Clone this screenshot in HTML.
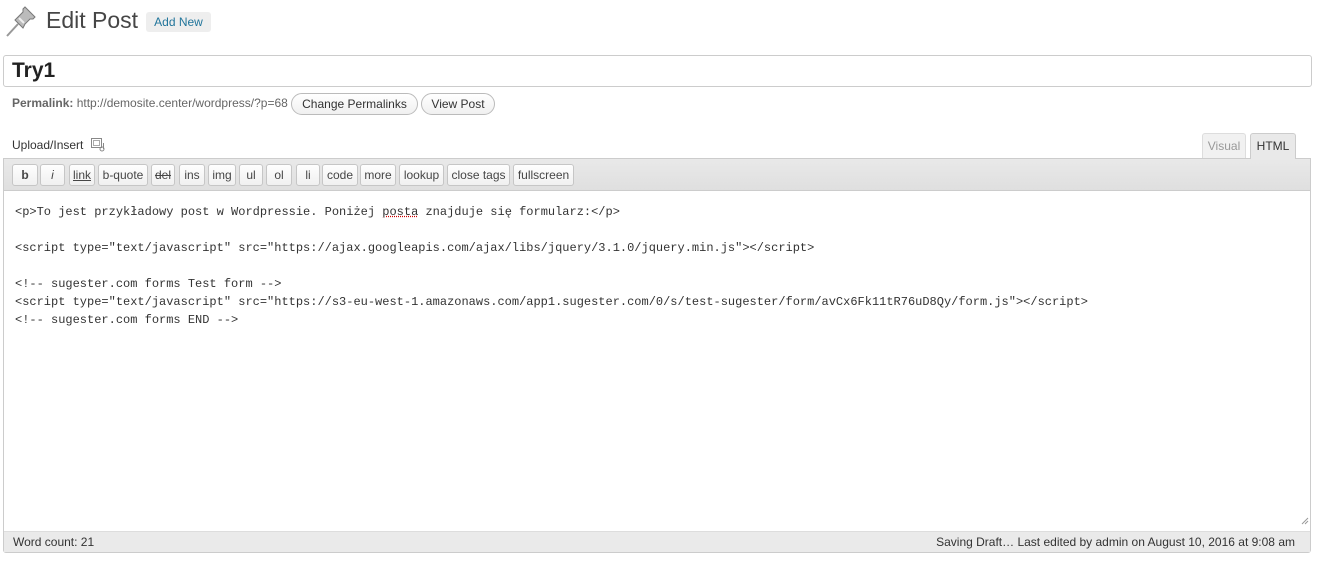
<!DOCTYPE html>
<html><head><meta charset="utf-8"><style>
*{box-sizing:border-box;margin:0;padding:0}
body{width:1317px;height:561px;background:#fff;font-family:"Liberation Sans",Arial,sans-serif;color:#333;position:relative;overflow:hidden}
.a{position:absolute}
.tb{position:absolute;top:164px;height:22px;border:1px solid #c6c6c6;border-radius:3px;background:linear-gradient(#fefefe,#f0f0f0);font-size:12px;color:#464646;text-align:center;line-height:20px}
.pb{position:absolute;top:93px;height:22px;border:1px solid #bbb;border-radius:11px;background:linear-gradient(#fff,#f0f0f0);font-size:12px;color:#333;text-align:center;line-height:20px}
pre{font-family:"Liberation Mono",monospace;font-size:12px;line-height:18px;color:#333}
</style></head><body>
<svg class="a" style="left:5px;top:5px" width="32" height="33" viewBox="0 0 32 33">
<path d="M2 31 L13 19" stroke="#999" stroke-width="2"/>
<path d="M10 15 L18 23 L20 19 L25 14 L28 14 L30 12 L20 2 L18 4 L18 7 L13 12 Z" fill="#bbb" stroke="#777" stroke-width="1"/>
<path d="M14 13 L19 18" stroke="#eee" stroke-width="2"/>
</svg>
<div class="a" style="left:46px;top:7px;font-size:23px;color:#464646">Edit Post</div>
<div class="a" style="left:146px;top:12px;width:65px;height:20px;background:#eee;border-radius:3px;font-size:12px;color:#21759b;text-align:center;line-height:20px">Add New</div>
<div class="a" style="left:3px;top:55px;width:1309px;height:32px;border:1px solid #ccc;border-radius:3px"></div>
<div class="a" style="left:12px;top:58px;font-size:21px;font-weight:bold;color:#222;line-height:26px">Try1</div>
<div class="a" style="left:12px;top:96px;font-size:12px;color:#666"><b>Permalink:</b> http://demosite.center/wordpress/?p=68</div>
<div class="pb" style="left:291px;width:127px">Change Permalinks</div>
<div class="pb" style="left:421px;width:74px">View Post</div>
<div class="a" style="left:12px;top:138px;font-size:12px;color:#333">Upload/Insert</div>
<svg class="a" style="left:90px;top:137px" width="16" height="15" viewBox="0 0 16 15"><rect x="1.5" y="1.5" width="10" height="9" fill="#fff" stroke="#888"/><rect x="3.5" y="3.5" width="6" height="5" fill="none" stroke="#aaa"/><circle cx="12" cy="12" r="2" fill="none" stroke="#888"/><path d="M13.5 6v6" stroke="#888"/></svg>
<div class="a" style="left:1202px;top:133px;width:44px;height:26px;border:1px solid #ddd;border-bottom:none;border-radius:3px 3px 0 0;background:#f1f1f1;font-size:12px;color:#999;text-align:center;line-height:24px">Visual</div>
<div class="a" style="left:1250px;top:133px;width:46px;height:26px;border:1px solid #ccc;border-bottom:none;border-radius:3px 3px 0 0;background:#e9e9e9;font-size:12px;color:#333;text-align:center;line-height:24px;z-index:2">HTML</div>
<div class="a" style="left:3px;top:158px;width:1308px;height:395px;border:1px solid #ccc;border-radius:0 0 3px 3px;background:#fff"></div>
<div class="a" style="left:4px;top:159px;width:1306px;height:32px;background:linear-gradient(#e9e9e9,#dfdfdf);border-bottom:1px solid #ccc"></div>
<div class="tb" style="left:12px;width:26px;font-weight:bold">b</div>
<div class="tb" style="left:40px;width:25px;font-style:italic">i</div>
<div class="tb" style="left:69px;width:26px;text-decoration:underline">link</div>
<div class="tb" style="left:98px;width:50px">b-quote</div>
<div class="tb" style="left:151px;width:24px;text-decoration:line-through">del</div>
<div class="tb" style="left:179px;width:26px">ins</div>
<div class="tb" style="left:208px;width:28px">img</div>
<div class="tb" style="left:239px;width:24px">ul</div>
<div class="tb" style="left:266px;width:26px">ol</div>
<div class="tb" style="left:296px;width:24px">li</div>
<div class="tb" style="left:322px;width:36px">code</div>
<div class="tb" style="left:360px;width:36px">more</div>
<div class="tb" style="left:399px;width:45px">lookup</div>
<div class="tb" style="left:447px;width:63px">close tags</div>
<div class="tb" style="left:513px;width:61px">fullscreen</div>
<pre class="a" style="left:15px;top:203px">&lt;p&gt;To jest przykładowy post w Wordpressie. Poniżej <span style="text-decoration:underline dotted #c00">posta</span> znajduje się formularz:&lt;/p&gt;

&lt;script type="text/javascript" src="https://ajax.googleapis.com/ajax/libs/jquery/3.1.0/jquery.min.js"&gt;&lt;/script&gt;

&lt;!-- sugester.com forms Test form --&gt;
&lt;script type="text/javascript" src="https://s3-eu-west-1.amazonaws.com/app1.sugester.com/0/s/test-sugester/form/avCx6Fk11tR76uD8Qy/form.js"&gt;&lt;/script&gt;
&lt;!-- sugester.com forms END --&gt;</pre>
<svg class="a" style="left:1301px;top:517px" width="8" height="8"><path d="M7 1L1 7M7 4L4 7" stroke="#999"/></svg>
<div class="a" style="left:4px;top:531px;width:1306px;height:21px;background:#eaeaea;border-top:1px solid #ddd"></div>
<div class="a" style="left:13px;top:535px;font-size:12px;color:#333">Word count: 21</div>
<div class="a" style="right:22px;top:535px;font-size:12px;color:#333">Saving Draft… Last edited by admin on August 10, 2016 at 9:08 am</div>
</body></html>
